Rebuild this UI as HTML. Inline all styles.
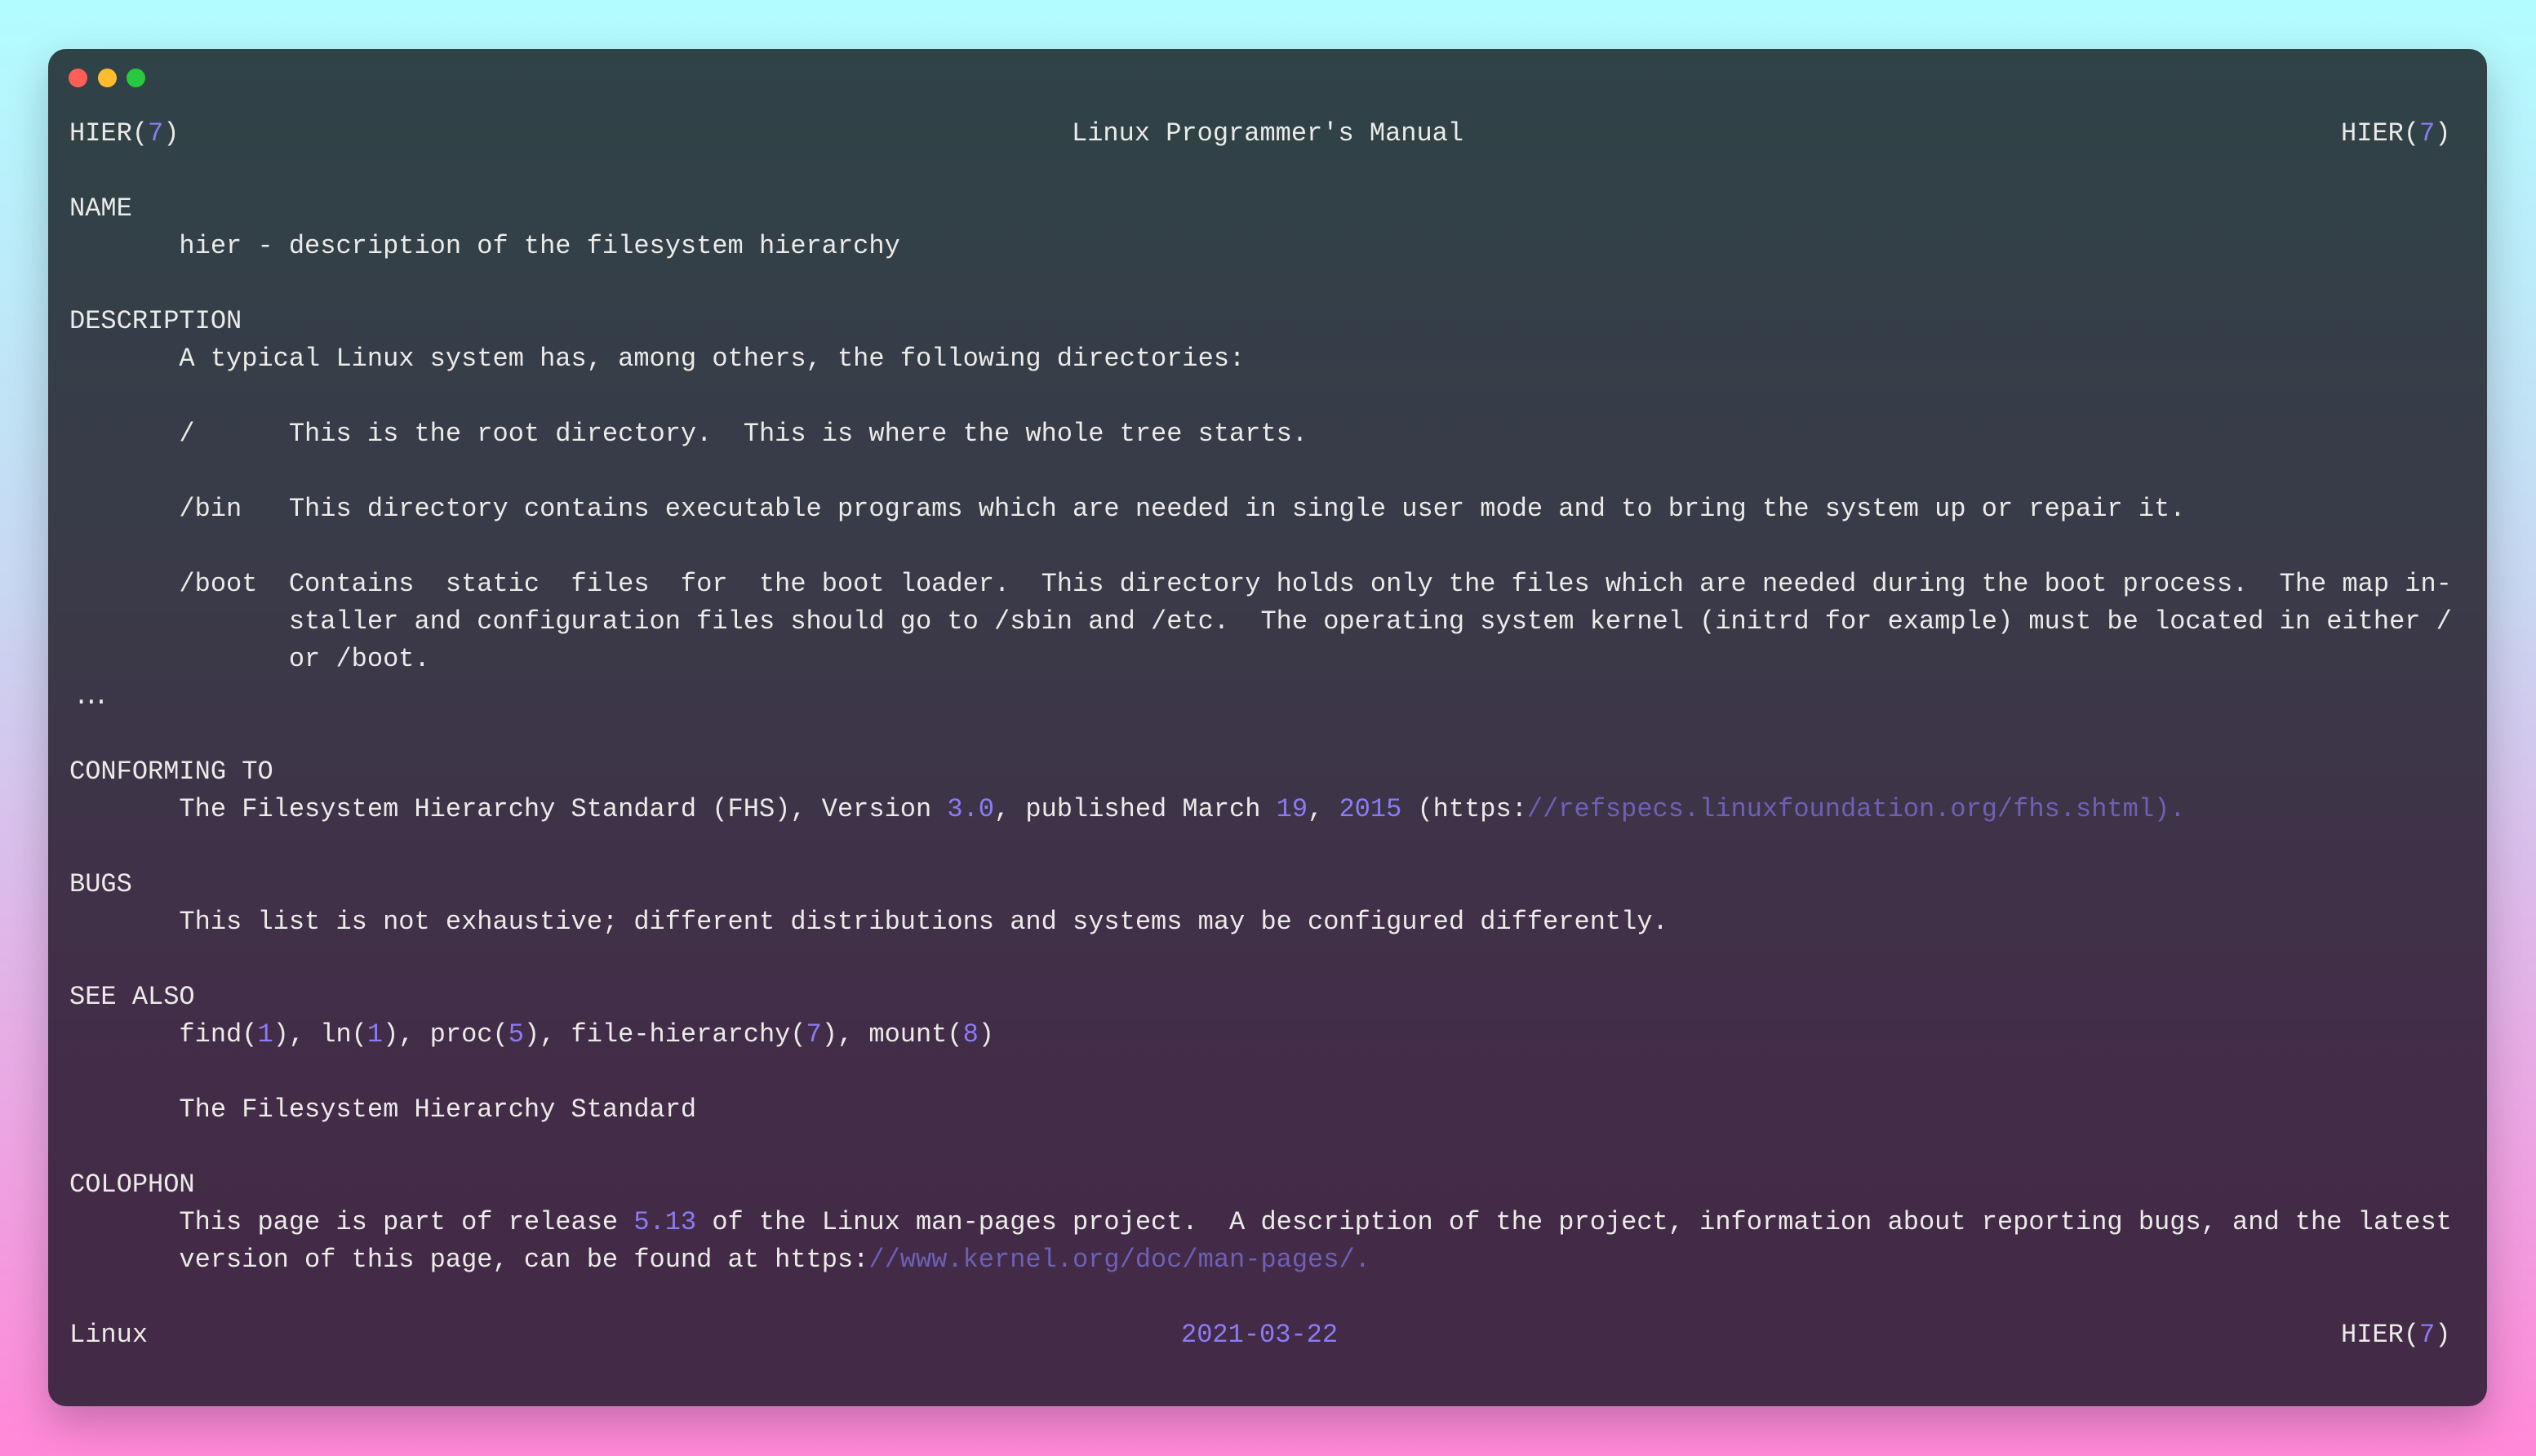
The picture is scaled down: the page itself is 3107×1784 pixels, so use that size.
<!DOCTYPE html>
<html><head><meta charset="utf-8"><style>
html,body{margin:0;padding:0}
body{width:3107px;height:1784px;overflow:hidden;background:linear-gradient(180deg,#b2fcff 0%,#c8d8f2 40%,#eaa8e4 75%,#ff88d8 100%);position:relative;font-family:"Liberation Mono",monospace}
.win{position:absolute;left:59px;top:60px;width:2988px;height:1663px;border-radius:22px;background:linear-gradient(180deg,#2f4347 0%,#3a3a48 40%,#432c48 75%,#432a47 100%);box-shadow:0 20px 50px rgba(0,0,0,0.22)}
.dot{position:absolute;top:84px;width:23px;height:23px;border-radius:50%}
pre,.a{font-family:"Liberation Mono",monospace;font-size:32px;line-height:46px;color:#ecebe8;white-space:pre}
pre{position:absolute;left:85px;top:141px;margin:0}
.a{position:absolute}
.n{color:#8b7cf4}.u{color:#6e60b4}
</style></head><body>
<div class="win"></div>
<div class="dot" style="left:84px;background:#ff5f57"></div>
<div class="dot" style="left:120px;background:#febc2e"></div>
<div class="dot" style="left:155px;background:#28c840"></div>
<span class="a" style="left:1313px;top:141px">Linux Programmer's Manual</span>
<span class="a" style="left:2868px;top:141px">HIER(<span class="n">7</span>)</span>
<span class="a" style="left:90px;top:831px;letter-spacing:-7px">...</span>
<span class="a n" style="left:1447px;top:1613px">2021-03-22</span>
<span class="a" style="left:2868px;top:1613px">HIER(<span class="n">7</span>)</span>
<pre>HIER(<span class="n">7</span>)

NAME
       hier - description of the filesystem hierarchy

DESCRIPTION
       A typical Linux system has, among others, the following directories:

       /      This is the root directory.  This is where the whole tree starts.

       /bin   This directory contains executable programs which are needed in single user mode and to bring the system up or repair it.

       /boot  Contains  static  files  for  the boot loader.  This directory holds only the files which are needed during the boot process.  The map in-
              staller and configuration files should go to /sbin and /etc.  The operating system kernel (initrd for example) must be located in either /
              or /boot.


CONFORMING TO
       The Filesystem Hierarchy Standard (FHS), Version <span class="n">3.0</span>, published March <span class="n">19</span>, <span class="n">2015</span> (https:<span class="u">//refspecs.linuxfoundation.org/fhs.shtml).</span>

BUGS
       This list is not exhaustive; different distributions and systems may be configured differently.

SEE ALSO
       find(<span class="n">1</span>), ln(<span class="n">1</span>), proc(<span class="n">5</span>), file-hierarchy(<span class="n">7</span>), mount(<span class="n">8</span>)

       The Filesystem Hierarchy Standard

COLOPHON
       This page is part of release <span class="n">5.13</span> of the Linux man-pages project.  A description of the project, information about reporting bugs, and the latest
       version of this page, can be found at https:<span class="u">//www.kernel.org/doc/man-pages/.</span>

Linux</pre>
</body></html>
